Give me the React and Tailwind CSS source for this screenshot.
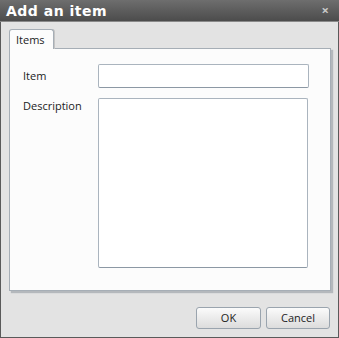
export default function App() {
  return (
    <div className="w-[339px] h-[338px] bg-[#e3e3e3] border-x border-b border-[#5a5a5a] flex flex-col" style={{ fontFamily: '"Segoe UI", "Open Sans", "Noto Sans", sans-serif' }}>
      <div className="h-[22px] shrink-0 bg-gradient-to-b from-[#6e6e6e] to-[#4c4c4c] border-b border-[#8a8a8a] flex items-center justify-between pl-[6px] pr-[10px] -mx-px">
        <span className="text-white font-bold text-[14px] leading-none tracking-[0.5px]" style={{ fontFamily: '"DejaVu Sans", sans-serif' }}>Add an item</span>
        <span className="text-[#c8c8c8] text-[13px] font-bold leading-none">×</span>
      </div>
      <div className="flex flex-col pl-[8px] pr-[7px] pt-[7px]">
        <div className="flex">
          <div className="h-[20px] w-[45px] bg-[#fcfcfc] border border-b-0 border-[#a6aeb6] rounded-t-[3px] text-[11px] text-[#222] pl-[6px] pt-[2px] leading-[15px] relative z-10 -mb-px shadow-[1px_0_0_#c4c4c4]">Items</div>
        </div>
        <div className="h-[243px] bg-[#fcfcfc] border border-[#a6aeb6] shadow-[2px_2px_1px_#b4b8bc] flex flex-col pl-[13px] pt-[15px]">
          <div className="flex items-center h-[24px]">
            <span className="w-[75px] text-[11px] text-[#222] pt-[1px]">Item</span>
            <div className="w-[211px] h-[24px] bg-white border border-[#aab4be] border-b-[#8c98a4] rounded-[2px]" />
          </div>
          <div className="flex mt-[10px]">
            <span className="w-[75px] text-[11px] text-[#222]">Description</span>
            <div className="w-[210px] h-[170px] bg-white border border-[#aab4be] border-b-[#8c98a4] rounded-[2px]" />
          </div>
        </div>
        <div className="flex justify-end gap-[5px] mt-[16px] pr-[1px]">
          <button className="w-[65px] h-[22px] rounded-[3px] border border-[#9aa4ae] bg-gradient-to-b from-[#fbfbfb] to-[#dcdcdc] text-[11px] text-[#222]">OK</button>
          <button className="w-[64px] h-[22px] rounded-[3px] border border-[#9aa4ae] bg-gradient-to-b from-[#fbfbfb] to-[#dcdcdc] text-[11px] text-[#222]">Cancel</button>
        </div>
      </div>
    </div>
  );
}
